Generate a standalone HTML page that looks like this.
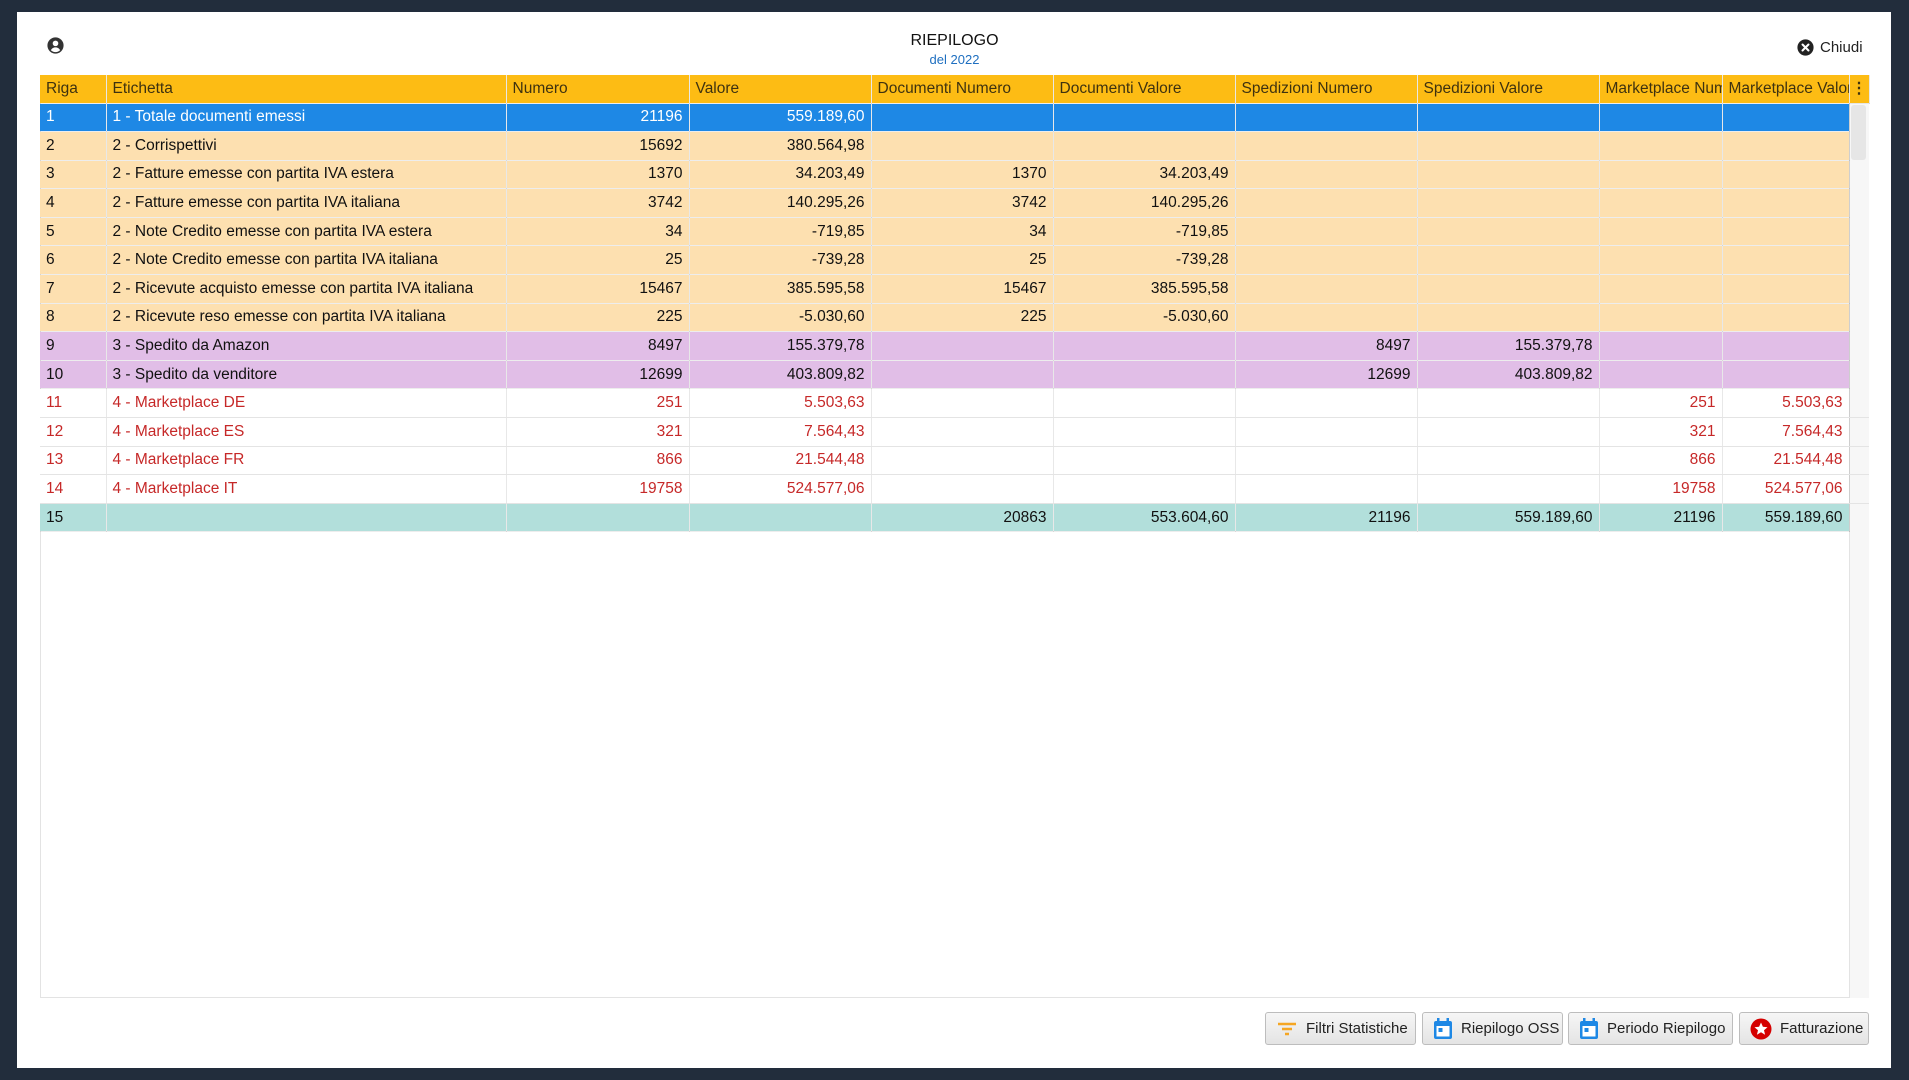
<!DOCTYPE html>
<html><head><meta charset="utf-8"><style>
*{margin:0;padding:0;box-sizing:border-box}
body{width:1909px;height:1080px;background:#222d3c;font-family:"Liberation Sans",sans-serif;position:relative;overflow:hidden}
.panel{position:absolute;left:17px;top:12px;width:1874px;height:1056px;background:#fff}
.t1{position:absolute;left:0;width:1909px;top:32px;text-align:center;font-size:16px;color:#111}
.t2{position:absolute;left:0;width:1909px;top:52px;text-align:center;font-size:13px;color:#1e6fc0}
.chiudi{position:absolute;left:1797px;top:39px;font-size:15px;color:#222;display:flex;align-items:center;gap:6px}
.grid{position:absolute;left:40px;top:75px;width:1829px;height:923px;border:1px solid #e3e3e3;border-top:none}
table{position:absolute;left:40px;top:75px;width:1829px;border-collapse:collapse;table-layout:fixed;font-size:15.5px}
td,th{height:28.6px;padding:0 6px;border-right:1px solid rgba(0,0,0,.09);border-bottom:1px solid rgba(0,0,0,.07);white-space:nowrap;overflow:hidden;text-overflow:clip}
th{background:#fdbc14;font-weight:normal;text-align:left;color:#3e3210;height:28px}
td.n{text-align:right}
tr.sel td{background:#1e88e5;color:#fff}
tr.o td{background:#fde0b0;color:#111}
tr.p td{background:#e1bee7;color:#111}
tr.r td{background:#fff;color:#c62828;border-bottom:1px solid #e4e4e4}
tr.g td{background:#b2dfdb;color:#111}
td.e{background:transparent!important;border:none}
.sb{position:absolute;left:1849px;top:103px;width:20px;height:895px;background:#f7f7f7;border-left:1px solid #e3e3e3}
.thumb{position:absolute;left:1851px;top:105px;width:15px;height:55px;background:#e6e6e6;border-radius:3px}
.btn{position:absolute;top:1012px;height:33px;border:1px solid #bdbdbd;border-radius:3px;background:linear-gradient(#f6f6f6,#e4e4e4);font-size:15px;color:#222;display:flex;align-items:center;gap:8px;padding-left:10px}
</style></head><body>
<div class="panel"></div>
<svg style="position:absolute;left:47px;top:37px" width="17" height="17" viewBox="0 0 20 20"><circle cx="10" cy="10" r="9.5" fill="#333"/><circle cx="10" cy="7.5" r="3.3" fill="#fff"/><path d="M4.5 15.5c1.5-2.5 3.3-3.3 5.5-3.3s4 .8 5.5 3.3c-1.5 1.5-3.4 2.3-5.5 2.3s-4-.8-5.5-2.3z" fill="#fff"/></svg>
<div class="t1">RIEPILOGO</div>
<div class="t2">del 2022</div>
<div class="chiudi"><svg width="17" height="17" viewBox="0 0 20 20"><circle cx="10" cy="10" r="9.5" fill="#222"/><path d="M6.5 6.5l7 7M13.5 6.5l-7 7" stroke="#fff" stroke-width="2.4" stroke-linecap="round"/></svg>Chiudi</div>
<div class="grid"></div>
<div class="sb"></div><div class="thumb"></div>
<table>
<colgroup><col style="width:66px"><col style="width:400px"><col style="width:183px"><col style="width:182px"><col style="width:182px"><col style="width:182px"><col style="width:182px"><col style="width:182px"><col style="width:123px"><col style="width:127px"><col style="width:20px"></colgroup>
<tr><th>Riga</th><th>Etichetta</th><th>Numero</th><th>Valore</th><th>Documenti Numero</th><th>Documenti Valore</th><th>Spedizioni Numero</th><th>Spedizioni Valore</th><th>Marketplace Numero</th><th>Marketplace Valore</th><th style="padding:0;text-align:center;font-weight:bold">&#8942;</th></tr>
<tr class="sel"><td>1</td><td>1 - Totale documenti emessi</td><td class="n">21196</td><td class="n">559.189,60</td><td></td><td></td><td></td><td></td><td></td><td></td><td class="e"></td></tr>
<tr class="o"><td>2</td><td>2 - Corrispettivi</td><td class="n">15692</td><td class="n">380.564,98</td><td></td><td></td><td></td><td></td><td></td><td></td><td class="e"></td></tr>
<tr class="o"><td>3</td><td>2 - Fatture emesse con partita IVA estera</td><td class="n">1370</td><td class="n">34.203,49</td><td class="n">1370</td><td class="n">34.203,49</td><td></td><td></td><td></td><td></td><td class="e"></td></tr>
<tr class="o"><td>4</td><td>2 - Fatture emesse con partita IVA italiana</td><td class="n">3742</td><td class="n">140.295,26</td><td class="n">3742</td><td class="n">140.295,26</td><td></td><td></td><td></td><td></td><td class="e"></td></tr>
<tr class="o"><td>5</td><td>2 - Note Credito emesse con partita IVA estera</td><td class="n">34</td><td class="n">-719,85</td><td class="n">34</td><td class="n">-719,85</td><td></td><td></td><td></td><td></td><td class="e"></td></tr>
<tr class="o"><td>6</td><td>2 - Note Credito emesse con partita IVA italiana</td><td class="n">25</td><td class="n">-739,28</td><td class="n">25</td><td class="n">-739,28</td><td></td><td></td><td></td><td></td><td class="e"></td></tr>
<tr class="o"><td>7</td><td>2 - Ricevute acquisto emesse con partita IVA italiana</td><td class="n">15467</td><td class="n">385.595,58</td><td class="n">15467</td><td class="n">385.595,58</td><td></td><td></td><td></td><td></td><td class="e"></td></tr>
<tr class="o"><td>8</td><td>2 - Ricevute reso emesse con partita IVA italiana</td><td class="n">225</td><td class="n">-5.030,60</td><td class="n">225</td><td class="n">-5.030,60</td><td></td><td></td><td></td><td></td><td class="e"></td></tr>
<tr class="p"><td>9</td><td>3 - Spedito da Amazon</td><td class="n">8497</td><td class="n">155.379,78</td><td></td><td></td><td class="n">8497</td><td class="n">155.379,78</td><td></td><td></td><td class="e"></td></tr>
<tr class="p"><td>10</td><td>3 - Spedito da venditore</td><td class="n">12699</td><td class="n">403.809,82</td><td></td><td></td><td class="n">12699</td><td class="n">403.809,82</td><td></td><td></td><td class="e"></td></tr>
<tr class="r"><td>11</td><td>4 - Marketplace DE</td><td class="n">251</td><td class="n">5.503,63</td><td></td><td></td><td></td><td></td><td class="n">251</td><td class="n">5.503,63</td><td class="e"></td></tr>
<tr class="r"><td>12</td><td>4 - Marketplace ES</td><td class="n">321</td><td class="n">7.564,43</td><td></td><td></td><td></td><td></td><td class="n">321</td><td class="n">7.564,43</td><td class="e"></td></tr>
<tr class="r"><td>13</td><td>4 - Marketplace FR</td><td class="n">866</td><td class="n">21.544,48</td><td></td><td></td><td></td><td></td><td class="n">866</td><td class="n">21.544,48</td><td class="e"></td></tr>
<tr class="r"><td>14</td><td>4 - Marketplace IT</td><td class="n">19758</td><td class="n">524.577,06</td><td></td><td></td><td></td><td></td><td class="n">19758</td><td class="n">524.577,06</td><td class="e"></td></tr>
<tr class="g"><td>15</td><td></td><td></td><td></td><td class="n">20863</td><td class="n">553.604,60</td><td class="n">21196</td><td class="n">559.189,60</td><td class="n">21196</td><td class="n">559.189,60</td><td class="e"></td></tr>
</table>
<div class="btn" style="left:1265px;width:151px"><svg width="22" height="18" viewBox="0 0 22 18"><path d="M2 4h18M6 9h10M9 14h4" stroke="#f5a623" stroke-width="2.4"/></svg>Filtri Statistiche</div>
<div class="btn" style="left:1422px;width:141px"><svg width="20" height="22" viewBox="0 0 20 22"><rect x="1" y="3" width="18" height="18" rx="2" fill="#1e88e5"/><rect x="3.5" y="8" width="13" height="10.5" fill="#fff"/><rect x="5.5" y="10" width="4" height="4" fill="#1e88e5"/><rect x="4" y="0" width="2.5" height="5" fill="#1e88e5"/><rect x="13.5" y="0" width="2.5" height="5" fill="#1e88e5"/></svg>Riepilogo OSS</div>
<div class="btn" style="left:1568px;width:165px"><svg width="20" height="22" viewBox="0 0 20 22"><rect x="1" y="3" width="18" height="18" rx="2" fill="#1e88e5"/><rect x="3.5" y="8" width="13" height="10.5" fill="#fff"/><rect x="5.5" y="10" width="4" height="4" fill="#1e88e5"/><rect x="4" y="0" width="2.5" height="5" fill="#1e88e5"/><rect x="13.5" y="0" width="2.5" height="5" fill="#1e88e5"/></svg>Periodo Riepilogo</div>
<div class="btn" style="left:1739px;width:130px"><svg width="22" height="22" viewBox="0 0 22 22"><circle cx="11" cy="11" r="10.5" fill="#d50000"/><path d="M11 4.5l1.9 4.3 4.6.4-3.5 3 1.1 4.5-4.1-2.5-4.1 2.5 1.1-4.5-3.5-3 4.6-.4z" fill="#fff"/></svg>Fatturazione</div>
</body></html>
